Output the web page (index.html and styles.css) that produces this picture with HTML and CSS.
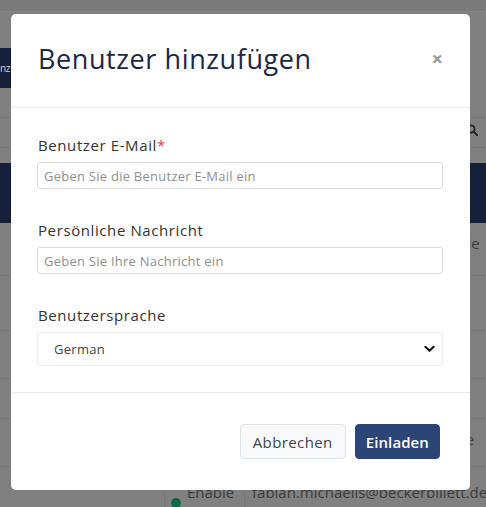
FILE: index.html
```html
<!DOCTYPE html>
<html lang="de">
<head>
<meta charset="utf-8">
<title>Benutzer hinzufügen</title>
<link rel="stylesheet" href="styles.css">
</head>
<body>
<div class="page">
  <div class="row r-top"></div>
  <div class="row r-gap1"></div>
  <div class="row r-nav"><div class="left navy nav-text">nz</div></div>
  <div class="row r-gap2 line-bottom"></div>
  <div class="row r-search line-bottom">
    <div class="left"></div>
    <div class="right">
      <svg class="search" viewBox="0 0 12 12" width="12" height="12"><circle cx="5" cy="5" r="3.6" fill="none" stroke="#222" stroke-width="1.8"/><path d="M7.6 7.6 L11 11" stroke="#222" stroke-width="2" stroke-linecap="round"/></svg>
    </div>
  </div>
  <div class="row r-gap3"></div>
  <div class="row r-bar"><div class="left navy"></div><div class="right navy"></div></div>
  <div class="row r-de line-bottom"><div class="left"></div><div class="right dim">de</div></div>
  <div class="row r-plain line-bottom"></div>
  <div class="row r-plain2 line-bottom"></div>
  <div class="row r-plain3 line-bottom"></div>
  <div class="row r-le line-bottom"><div class="left"></div><div class="right dim">le</div></div>
  <div class="row r-last">
    <div class="cell c1"></div>
    <div class="cell c2"><span class="dot"></span><span class="dim">Enable</span></div>
    <div class="cell c3 dim">fabian.michaelis@beckerbillett.de</div>
  </div>
</div>

<div class="modal">
  <div class="modal-header">
    <h2 class="modal-title">Benutzer hinzufügen</h2>
    <span class="close">×</span>
  </div>
  <div class="modal-body">
    <div class="field">
      <label class="label">Benutzer E-Mail<span class="req">*</span></label>
      <input class="input" type="text" placeholder="Geben Sie die Benutzer E-Mail ein">
    </div>
    <div class="field">
      <label class="label">Persönliche Nachricht</label>
      <input class="input" type="text" placeholder="Geben Sie Ihre Nachricht ein">
    </div>
    <div class="field">
      <label class="label">Benutzersprache</label>
      <div class="select">
        <span>German</span>
        <svg viewBox="0 0 12 8" width="11" height="8"><path d="M1.5 1.5 L6 6 L10.5 1.5" fill="none" stroke="#111" stroke-width="2.2" stroke-linecap="round" stroke-linejoin="round"/></svg>
      </div>
    </div>
  </div>
  <div class="modal-footer">
    <button class="btn btn-light">Abbrechen</button>
    <button class="btn btn-primary">Einladen</button>
  </div>
</div>
</body>
</html>
```
FILE: styles.css
```css
* { box-sizing: border-box; }
html, body { margin: 0; padding: 0; }
body {
  width: 486px;
  height: 507px;
  overflow: hidden;
  background: #808080;
  font-family: "Open Sans", "Liberation Sans", sans-serif;
  position: relative;
}
.page { display: flex; flex-direction: column; }
.row { display: flex; justify-content: space-between; }
.r-top { height: 12px; background: #7a7a7a; border-bottom: 1px solid #858585; }
.r-gap1 { height: 36px; }
.r-nav { height: 40px; }
.r-gap2 { height: 30px; }
.r-search { height: 30px; }
.r-gap3 { height: 15px; }
.r-bar { height: 60px; }
.r-de { height: 53px; }
.r-plain { height: 55px; }
.r-plain2 { height: 48px; }
.r-plain3 { height: 40px; }
.r-le { height: 48px; }
.r-last { height: 40px; }
.line-bottom { border-bottom: 1px solid #787878; }
.left { width: 11px; }
.right { width: 16px; }
.navy { background: #16203a; }
.nav-text { color: #c8ccd6; font-size: 10px; line-height: 40px; letter-spacing: -0.5px; overflow: hidden; white-space: nowrap; }
.search { margin-top: 6px; margin-left: -4px; }
.dim { color: #3c3c3c; font-size: 15px; white-space: nowrap; }
.r-de .right, .r-le .right { padding-top: 10px; margin-left: -8px; width: 24px; overflow: hidden; }
.cell { height: 100%; }
.c1 { width: 165px; border-right: 1px solid #777; }
.c2 { width: 80px; display: flex; align-items: flex-start; gap: 6px; padding: 15px 0 0 6px; border-right: 1px solid #777; }
.c3 { flex: 1; padding: 15px 0 0 7px; overflow: hidden; }
.dot { width: 10px; height: 10px; border-radius: 50%; background: #0c6b45; margin-top: 16px; flex: none; }

.modal {
  position: absolute;
  left: 11px;
  top: 14px;
  width: 459px;
  height: 476px;
  background: #fff;
  border-radius: 5px;
  display: flex;
  flex-direction: column;
}
.modal-header {
  height: 94px;
  display: flex;
  align-items: center;
  justify-content: space-between;
  padding: 0 27px 4px 27px;
  border-bottom: 1px solid #e9ecef;
}
.modal-title {
  margin: 0;
  font-size: 27px;
  font-weight: 400;
  color: #1c2747;
  letter-spacing: 0.6px;
}
.close { font-size: 20px; font-weight: 700; color: #9a9a9a; line-height: 1; }
.modal-body {
  padding: 27px 27px 26px 26px;
  display: flex;
  flex-direction: column;
  gap: 31px;
  border-bottom: 1px solid #e9ecef;
}
.field { display: flex; flex-direction: column; gap: 6px; }
.label { font-size: 15px; line-height: 21px; color: #333; padding-left: 1px; letter-spacing: 0.6px; }
.req { color: #e0394a; }
.input {
  height: 27px;
  border: 1px solid #dcdcdc;
  border-radius: 3px;
  padding: 0 6px;
  font-family: inherit;
  font-size: 13px;
  letter-spacing: 0.25px;
  color: #333;
}
.input::placeholder { color: #8f8f8f; }
.select {
  height: 34px;
  border: 1px solid #ebebeb;
  border-radius: 3px;
  display: flex;
  align-items: center;
  justify-content: space-between;
  padding: 0 7px 0 16px;
  font-size: 13px;
  letter-spacing: 0.3px;
  color: #444;
}
.modal-footer {
  flex: 1;
  display: flex;
  align-items: center;
  justify-content: flex-end;
  gap: 9px;
  padding: 0 30px;
}
.btn {
  height: 35px;
  border-radius: 4px;
  font-family: inherit;
  font-size: 15px;
  letter-spacing: 0.4px;
  padding: 0 12px;
}
.btn-light { background: #f8f9fa; border: 1px solid #dfe2e6; color: #444; }
.btn-primary { background: #2c4577; border: 1px solid #2c4577; color: #fff; font-weight: 600; padding: 0 10px; letter-spacing: 0.1px; }
```
